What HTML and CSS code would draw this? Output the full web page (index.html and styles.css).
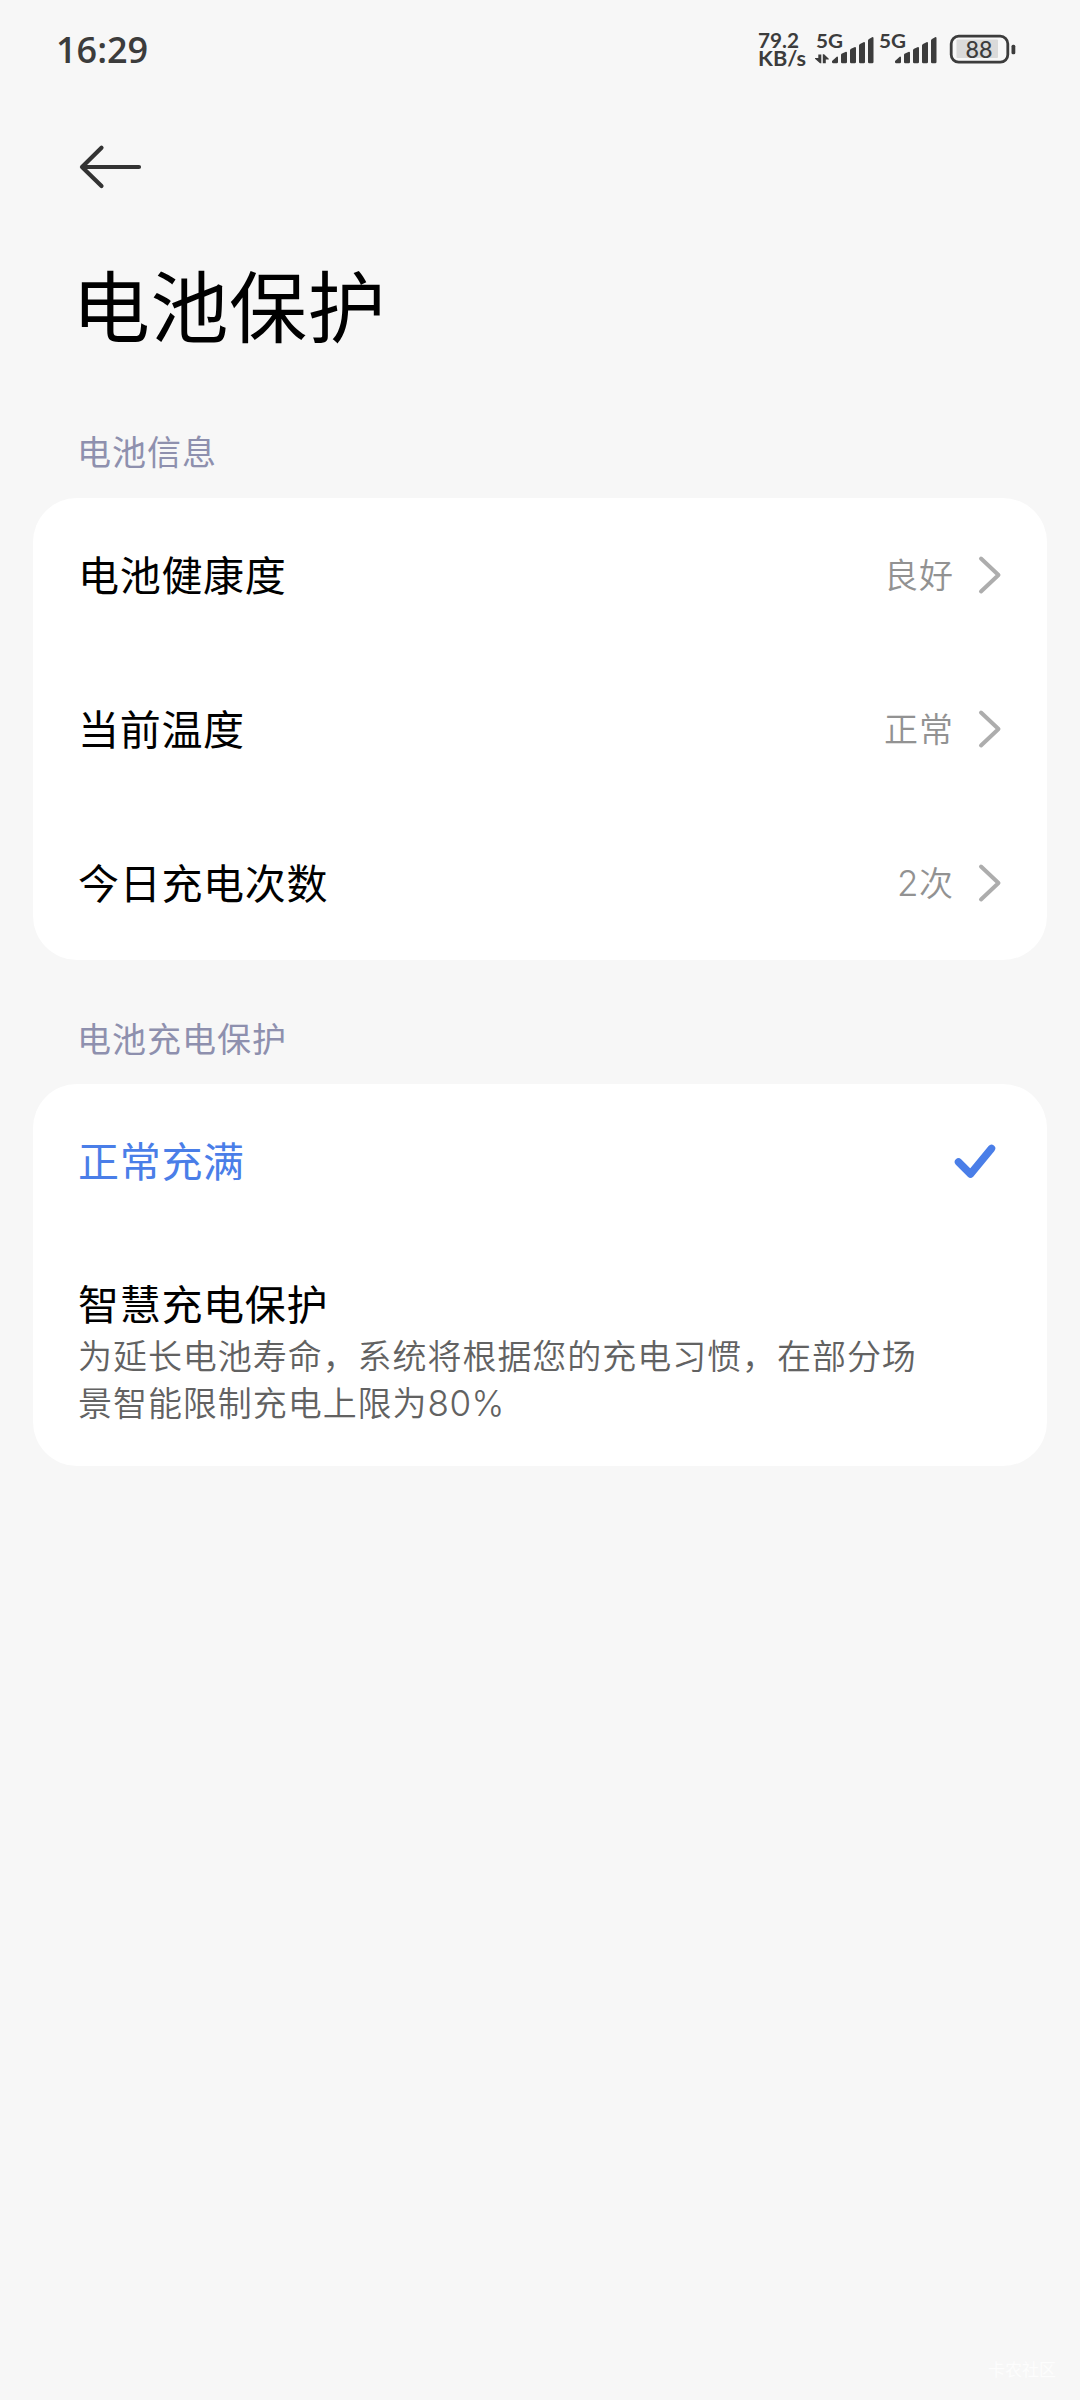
FILE: index.html
```html
<!DOCTYPE html>
<html lang="zh-CN">
<head>
<meta charset="utf-8">
<title>电池保护</title>
<link rel="stylesheet" href="styles.css">
</head>
<body>
<div class="screen">
  <header class="status">
    <span class="clock">16:29</span>
    <svg class="status-icons" width="270" height="50" viewBox="750 25 270 50">
      <g class="speed">
        <text x="758" y="48" textLength="41" lengthAdjust="spacingAndGlyphs">79.2</text>
        <text x="758" y="66" textLength="48" lengthAdjust="spacingAndGlyphs">KB/s</text>
      </g>
      <text class="net" x="816" y="48" textLength="27" lengthAdjust="spacingAndGlyphs">5G</text>
      <text class="net" x="879" y="48" textLength="27" lengthAdjust="spacingAndGlyphs">5G</text>
      <g class="ink">
        <path d="M818.300 54.500h3v8.700h-1.300l-5-4.500v-.8h3.300zM822.800 63.200V54.300h1.300l4.700 4.500v.8h-3v3.600z"/>
        <path id="bars" d="M832 61l5-4.500q1 0 1 1V62q0 1.300-1.300 1.300h-3.400q-1.300 0-1.300-1.300zM841 55q0-1 1-1.400l4-1.800q1 0 1 1V62q0 1.300-1.300 1.300h-3.400q-1.300 0-1.300-1.300zM850 50.300q0-1 1-1.500l4-1.900q1 0 1 1V62q0 1.300-1.300 1.300h-3.400q-1.300 0-1.300-1.300zM859 45.500q0-1 1-1.500l4-2q1 0 1 1V62q0 1.300-1.300 1.300h-3.400q-1.300 0-1.300-1.300zM868 40.500q0-1 1-1.500l3.500-2q1 0 1 1V62q0 1.300-1.300 1.300h-2.900q-1.300 0-1.300-1.300z"/>
        <use href="#bars" x="63"/>
        <rect x="1011.500" y="44.700" width="3.800" height="9.500" rx="1.500"/>
      </g>
      <rect class="charge" x="956.500" y="39.500" width="41.500" height="18.500" rx="1"/>
      <rect class="shell" x="951.200" y="36.200" width="56.600" height="26" rx="7.500"/>
      <text class="level" x="965.500" y="57.700" textLength="27" lengthAdjust="spacingAndGlyphs">88</text>
    </svg>
  </header>

  <nav class="nav">
    <svg width="64" height="48" viewBox="0 0 64 48" class="back"><path d="M61 24H4M23.500 4.700 4 24l19.500 19"/></svg>
  </nav>
  <h1 class="title">电池保护</h1>

  <h2 class="section">电池信息</h2>
  <section class="card">
    <div class="row"><span class="name">电池健康度</span><span class="value">良好</span><svg class="chevron" width="24" height="40" viewBox="0 0 24 40"><path d="M3 3.500 20.500 20 3 36.500"/></svg></div>
    <div class="row"><span class="name">当前温度</span><span class="value">正常</span><svg class="chevron" width="24" height="40" viewBox="0 0 24 40"><path d="M3 3.500 20.500 20 3 36.500"/></svg></div>
    <div class="row"><span class="name">今日充电次数</span><span class="value"><span class="num">2</span>次</span><svg class="chevron" width="24" height="40" viewBox="0 0 24 40"><path d="M3 3.500 20.500 20 3 36.500"/></svg></div>
  </section>

  <h2 class="section">电池充电保护</h2>
  <section class="card">
    <div class="row selected"><span class="name">正常充满</span><svg class="check" width="44" height="38" viewBox="0 0 44 38"><path d="M5.500 19 17.500 31 38.500 5.500"/></svg></div>
    <div class="option">
      <span class="name">智慧充电保护</span>
      <p class="desc">为延长电池寿命，系统将根据您的充电习惯，在部分场<br>景智能限制充电上限为<span class="num">80%</span></p>
    </div>
  </section>
  <footer class="mark">卡农社区</footer>
</div>
</body>
</html>
```
FILE: styles.css
```css
* { box-sizing: border-box; }
body {
  margin: 0;
  background: #f7f7f7;
  color: #000;
  font-family: "Noto Sans CJK SC", sans-serif;
}
.screen {
  width: 1080px;
  height: 2400px;
  display: flex;
  flex-direction: column;
}
.status {
  height: 100px;
  padding: 0 60px 0 56px;
  display: flex;
  align-items: center;
  justify-content: space-between;
}
.clock {
  padding-bottom: 1px;
  font: 550 36px/50px "Open Sans", sans-serif;
  color: #3c3c3c;
}
.status-icons { font-family: Lato, sans-serif; }
.status-icons text { fill: #3c3c3c; }
.speed { font-size: 20.500px; font-weight: 700; }
.net { font-size: 19.500px; font-weight: 700; }
.level { font-size: 22.500px; font-weight: 500; }
.ink { fill: #3c3c3c; }
.charge { fill: #dadada; }
.shell { fill: none; stroke: #3c3c3c; stroke-width: 2.800; }
.nav { height: 128px; padding: 43px 78px 0; }
.back { display: block; fill: none; stroke: #333; stroke-width: 4.200; stroke-linecap: round; stroke-linejoin: round; }
.title {
  margin: 0;
  padding-left: 72px;
  height: 156px;
  font-weight: 400;
  font-size: 78px;
  line-height: 150px;
  letter-spacing: .500px;
}
.section {
  margin: 0;
  padding: 26px 77px 0;
  height: 114px;
  font-weight: 400;
  font-size: 34px;
  line-height: 82px;
  letter-spacing: 1px;
  color: #8e90ae;
}
.card {
  margin: 0 33px;
  border-radius: 44px;
  background: #fff;
}
.card + .section { height: 124px; padding-top: 37px; }
.row {
  height: 154px;
  padding: 0 45px 4px 45px;
  display: flex;
  align-items: center;
}
.name {
  font-size: 41px;
  line-height: 52px;
  letter-spacing: .700px;
}
.value {
  margin-left: auto;
  font-size: 34px;
  font-weight: 350;
  letter-spacing: 1px;
  color: #929292;
}
.num { font-family: Inter, sans-serif; font-weight: 350; font-size: 35px; line-height: 1; letter-spacing: .500px; }
.chevron { position: relative; top: 2px; margin-left: 24px; fill: none; stroke: #adadad; stroke-width: 4; stroke-linecap: round; stroke-linejoin: round; }
.selected { color: #4a7ee8; }
.check { position: relative; top: 3px; margin-left: auto; margin-right: 5px; fill: none; stroke: #4a7ee8; stroke-width: 7.500; stroke-linecap: round; stroke-linejoin: round; }
.option { height: 228px; padding: 38px 45px 0; }
.option .name { display: block; }
.desc {
  margin: 3px 0 0;
  font-size: 34px;
  font-weight: 350;
  line-height: 47px;
  letter-spacing: .950px;
  color: #626262;
}
.mark {
  margin: auto 24px 18px auto;
  font-size: 17px;
  line-height: 26px;
  color: #fdfdfd;
}
```
